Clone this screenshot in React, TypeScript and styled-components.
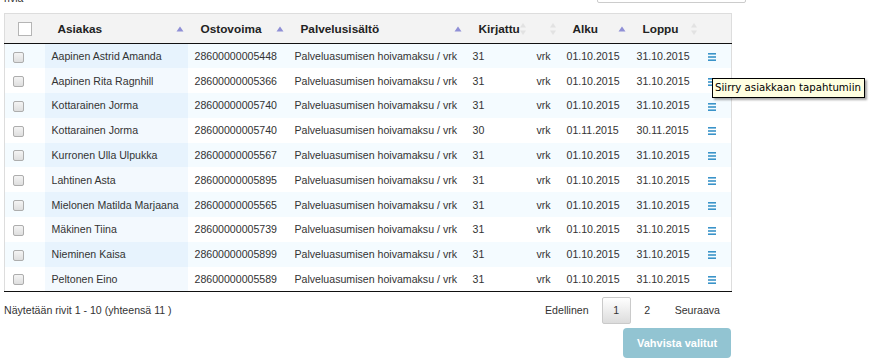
import React from 'react'
import styled, { createGlobalStyle } from 'styled-components'

interface Row {
  name: string
  id: string
  service: string
  amount: number
  unit: string
  start: string
  end: string
}

const rows: Row[] = [
  { name: 'Aapinen Astrid Amanda', id: '28600000005448', service: 'Palveluasumisen hoivamaksu / vrk', amount: 31, unit: 'vrk', start: '01.10.2015', end: '31.10.2015' },
  { name: 'Aapinen Rita Ragnhill', id: '28600000005366', service: 'Palveluasumisen hoivamaksu / vrk', amount: 31, unit: 'vrk', start: '01.10.2015', end: '31.10.2015' },
  { name: 'Kottarainen Jorma', id: '28600000005740', service: 'Palveluasumisen hoivamaksu / vrk', amount: 31, unit: 'vrk', start: '01.10.2015', end: '31.10.2015' },
  { name: 'Kottarainen Jorma', id: '28600000005740', service: 'Palveluasumisen hoivamaksu / vrk', amount: 30, unit: 'vrk', start: '01.11.2015', end: '30.11.2015' },
  { name: 'Kurronen Ulla Ulpukka', id: '28600000005567', service: 'Palveluasumisen hoivamaksu / vrk', amount: 31, unit: 'vrk', start: '01.10.2015', end: '31.10.2015' },
  { name: 'Lahtinen Asta', id: '28600000005895', service: 'Palveluasumisen hoivamaksu / vrk', amount: 31, unit: 'vrk', start: '01.10.2015', end: '31.10.2015' },
  { name: 'Mielonen Matilda Marjaana', id: '28600000005565', service: 'Palveluasumisen hoivamaksu / vrk', amount: 31, unit: 'vrk', start: '01.10.2015', end: '31.10.2015' },
  { name: 'Mäkinen Tiina', id: '28600000005739', service: 'Palveluasumisen hoivamaksu / vrk', amount: 31, unit: 'vrk', start: '01.10.2015', end: '31.10.2015' },
  { name: 'Nieminen Kaisa', id: '28600000005899', service: 'Palveluasumisen hoivamaksu / vrk', amount: 31, unit: 'vrk', start: '01.10.2015', end: '31.10.2015' },
  { name: 'Peltonen Eino', id: '28600000005589', service: 'Palveluasumisen hoivamaksu / vrk', amount: 31, unit: 'vrk', start: '01.10.2015', end: '31.10.2015' },
]

type Sort = 'asc' | 'both' | 'none'

const columns: { label: string; width: number; sort: Sort }[] = [
  { label: '', width: 40, sort: 'none' },
  { label: 'Asiakas', width: 143, sort: 'asc' },
  { label: 'Ostovoima', width: 100, sort: 'asc' },
  { label: 'Palvelusisältö', width: 178, sort: 'asc' },
  { label: 'Kirjattu', width: 64, sort: 'both' },
  { label: '', width: 30, sort: 'both' },
  { label: 'Alku', width: 70, sort: 'asc' },
  { label: 'Loppu', width: 71, sort: 'both' },
  { label: '', width: 31, sort: 'none' },
]

const GlobalStyle = createGlobalStyle`
  body {
    margin: 0;
    background: #fff;
    font-family: "Liberation Sans", Arial, sans-serif;
    font-size: 10.6px;
    color: #333;
    overflow: hidden;
  }
`

const Page = styled.div`
  position: relative;
  width: 727px;
  padding: 0 4px;
`

const TopBar = styled.div`
  display: flex;
  justify-content: space-between;
  align-items: flex-end;
  margin-top: -27px;
  height: 30px;
`

const LengthLabel = styled.span`
  font-size: 10.6px;
  line-height: 12px;
  margin-bottom: -1px;
`

const Search = styled.input`
  box-sizing: border-box;
  width: 149px;
  height: 30px;
  margin-right: -15px;
  border: 1px solid #ccc;
  border-radius: 2px;
`

const Table = styled.table`
  width: 727px;
  margin-top: 10px;
  table-layout: fixed;
  border-collapse: collapse;
  border-left: 1px solid #ddd;
  border-right: 1px solid #ddd;
  border-bottom: 1px solid #111;
`

const HeadRow = styled.tr`
  background: #f3f3f3;
  border-top: 1px solid #ddd;
  border-bottom: 1px solid #111;
`

const Th = styled.th`
  position: relative;
  height: 29px;
  padding: 0 0 0 13px;
  text-align: left;
  font-weight: bold;
  font-size: 11.8px;
  color: #222;
  white-space: nowrap;
`

const SortMark = styled.span<{ $sort: Sort }>`
  position: absolute;
  right: ${(p) => (p.$sort === 'both' ? '3px' : '4px')};
  top: 50%;
  transform: translateY(-50%);
  display: flex;
`

const BodyRow = styled.tr<{ $odd: boolean }>`
  height: 24.8px;
  background: ${(p) => (p.$odd ? '#f4fbff' : '#fff')};
`

const Td = styled.td<{ $sorted?: boolean; $odd?: boolean }>`
  padding: 0 0 0 7px;
  white-space: nowrap;
  overflow: hidden;
  font-size: 10.6px;
  color: #333;
  background: ${(p) => (p.$sorted ? (p.$odd ? '#e7f3fd' : '#f3f9fe') : 'transparent')};
`

const RowCheck = styled.span`
  display: inline-block;
  width: 9px;
  height: 9px;
  margin-left: 1px;
  border: 1px solid #adadad;
  border-radius: 2px;
  background: linear-gradient(#f4f4f4, #dedede);
  vertical-align: middle;
`

const HeadCheck = styled.span`
  display: inline-block;
  width: 12px;
  height: 12px;
  border: 1px solid #b5b5b5;
  background: #fff;
  vertical-align: middle;
`

const Footer = styled.div`
  display: flex;
  justify-content: space-between;
  align-items: center;
  margin-top: 5px;
`

const Info = styled.span`
  font-size: 10.6px;
  color: #333;
`

const Pager = styled.div`
  display: flex;
  align-items: center;
`

const PageButton = styled.span<{ $current?: boolean }>`
  box-sizing: border-box;
  display: inline-block;
  min-width: 29px;
  height: 27px;
  line-height: 25px;
  padding: 0 10px;
  margin-left: 2px;
  text-align: center;
  font-size: 10.6px;
  color: #333;
  border: 1px solid ${(p) => (p.$current ? '#cacaca' : 'transparent')};
  border-radius: 2px;
  background: ${(p) => (p.$current ? 'linear-gradient(#fff, #dcdcdc)' : 'transparent')};
`

const Actions = styled.div`
  display: flex;
  justify-content: flex-end;
  margin-top: 4px;
`

const ConfirmButton = styled.button`
  box-sizing: border-box;
  width: 108px;
  height: 30px;
  border: none;
  border-radius: 4px;
  background: #92c4d2;
  color: #fff;
  font-family: "Liberation Sans", Arial, sans-serif;
  font-weight: bold;
  font-size: 11px;
  padding: 0;
`

const Tooltip = styled.div`
  position: absolute;
  left: 712px;
  top: 105px;
  padding: 2px 3px 2px 2px;
  background: #ffffe1;
  border: 1px solid #000;
  font-family: "DejaVu Sans", sans-serif;
  font-size: 10.2px;
  line-height: 14px;
  color: #000;
  white-space: nowrap;
  box-shadow: 2px 2px 2px rgba(0, 0, 0, 0.35);
`

const SortIcon: React.FC<{ sort: Sort }> = ({ sort }) => {
  if (sort === 'asc')
    return (
      <svg width="8" height="6" viewBox="0 0 8 6">
        <path d="M4 0.5 L7.5 5.5 H0.5 Z" fill="#8f8fd6" />
      </svg>
    )
  return (
    <svg width="8" height="14" viewBox="0 0 8 14">
      <path d="M4 1 L7 5.5 H1 Z" fill="#e2e2e2" />
      <path d="M4 13 L7 8.5 H1 Z" fill="#e2e2e2" />
    </svg>
  )
}

const ListIcon = () => (
  <svg width="8" height="8" viewBox="0 0 8 8" style={{ verticalAlign: 'middle' }}>
    <rect x="0" y="0" width="8" height="1.6" fill="#3a93c9" />
    <rect x="0" y="3.2" width="8" height="1.6" fill="#3a93c9" />
    <rect x="0" y="6.4" width="8" height="1.6" fill="#3a93c9" />
  </svg>
)

const App: React.FC = () => {
  return (
    <Page>
      <GlobalStyle />
      <TopBar>
        <LengthLabel>riviä</LengthLabel>
        <Search type="text" />
      </TopBar>
      <Table>
        <colgroup>
          {columns.map((c, i) => (
            <col key={i} style={{ width: c.width }} />
          ))}
        </colgroup>
        <thead>
          <HeadRow>
            {columns.map((c, i) => (
              <Th key={i}>
                {i === 0 ? <HeadCheck /> : c.label}
                {c.sort !== 'none' && (
                  <SortMark $sort={c.sort}>
                    <SortIcon sort={c.sort} />
                  </SortMark>
                )}
              </Th>
            ))}
          </HeadRow>
        </thead>
        <tbody>
          {rows.map((r, i) => {
            const odd = i % 2 === 0
            return (
              <BodyRow key={i} $odd={odd}>
                <Td>
                  <RowCheck />
                </Td>
                <Td $sorted $odd={odd}>
                  {r.name}
                </Td>
                <Td>{r.id}</Td>
                <Td>{r.service}</Td>
                <Td>{r.amount}</Td>
                <Td>{r.unit}</Td>
                <Td>{r.start}</Td>
                <Td>{r.end}</Td>
                <Td>
                  <ListIcon />
                </Td>
              </BodyRow>
            )
          })}
        </tbody>
      </Table>
      <Footer>
        <Info>Näytetään rivit 1 - 10 (yhteensä 11 )</Info>
        <Pager>
          <PageButton>Edellinen</PageButton>
          <PageButton $current>1</PageButton>
          <PageButton>2</PageButton>
          <PageButton>Seuraava</PageButton>
        </Pager>
      </Footer>
      <Actions>
        <ConfirmButton disabled>Vahvista valitut</ConfirmButton>
      </Actions>
      <Tooltip>Siirry asiakkaan tapahtumiin</Tooltip>
    </Page>
  )
}

export default App
